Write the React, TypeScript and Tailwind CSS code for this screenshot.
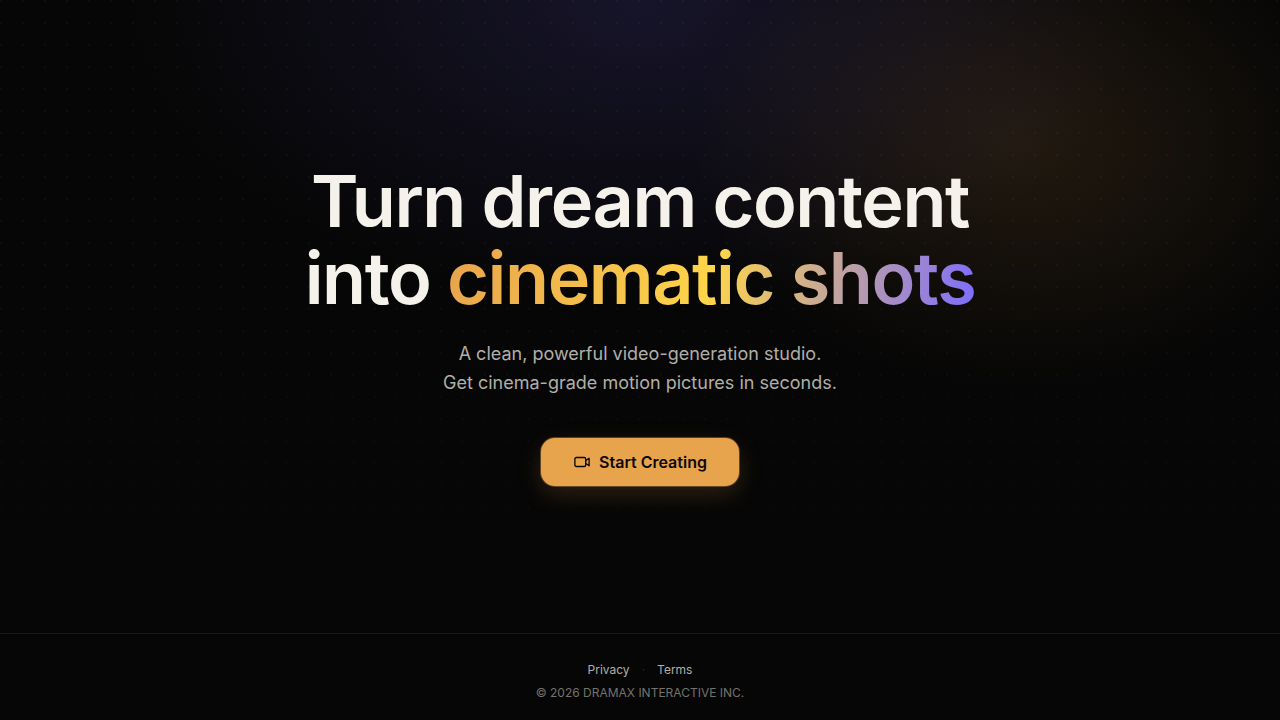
import type { SVGProps } from 'react'

interface FooterLink {
  label: string
  href: string
}

const FOOTER_LINKS: FooterLink[] = [
  { label: 'Privacy', href: '#privacy' },
  { label: 'Terms', href: '#terms' },
]

function VideoIcon(props: SVGProps<SVGSVGElement>) {
  return (
    <svg
      viewBox="0 0 24 24"
      fill="none"
      stroke="currentColor"
      strokeWidth="1.8"
      strokeLinecap="round"
      strokeLinejoin="round"
      aria-hidden="true"
      {...props}
    >
      <rect x="2.5" y="6" width="14.5" height="12" rx="2" />
      <path d="m17 10 4.5-3v10L17 14" />
    </svg>
  )
}

/**
 * Decorative backdrop: colour glows plus a dot grid that fades downwards
 */
function Backdrop() {
  return (
    <div aria-hidden="true" className="pointer-events-none absolute inset-0 -z-10">
      <div className="absolute inset-0 bg-[radial-gradient(ellipse_26%_34%_at_80%_20%,rgba(232,163,77,0.12),transparent),radial-gradient(ellipse_40%_42%_at_50%_0%,rgba(124,108,255,0.14),transparent)]" />
      <div className="absolute inset-0 bg-[radial-gradient(rgba(255,255,255,0.035)_1px,transparent_1px)] bg-[size:22px_22px] bg-[position:-10px_-10px] mask-[linear-gradient(to_bottom,black_40%,transparent_90%)]" />
    </div>
  )
}

function Hero() {
  return (
    <main className="flex flex-1 flex-col items-center justify-center px-6 pt-20 pb-[66px] text-center">
      <h1 className="text-7xl leading-[77px] font-semibold tracking-[-0.02em] text-[#f5f2eb]">
        Turn dream content
        <br />
        into{' '}
        <span className="bg-[linear-gradient(100deg,#e8a34d_0%,#ffd54a_50%,#7c6cff_100%)] bg-clip-text text-transparent">
          cinematic shots
        </span>
      </h1>
      <p className="mt-[23px] text-lg leading-[29px] text-[#b0afa8]">
        A clean, powerful video-generation studio.
        <br />
        Get cinema-grade motion pictures in seconds.
      </p>
      <button
        type="button"
        className="mt-[41px] flex h-12 items-center gap-2 rounded-[14px] bg-[#e8a34d] px-8 text-base font-semibold text-[#0b0805] shadow-[0_0_0_1px_rgba(232,163,77,0.35),0_8px_24px_rgba(232,163,77,0.18)]"
      >
        <VideoIcon className="size-[18px]" />
        Start Creating
      </button>
    </main>
  )
}

function Footer() {
  return (
    <footer className="flex flex-col items-center gap-[7px] border-t border-white/8 pt-7 pb-[19px] text-xs leading-4">
      <nav aria-label="Legal" className="flex items-center gap-3 text-[#b0afa8]">
        <a href={FOOTER_LINKS[0].href}>{FOOTER_LINKS[0].label}</a>
        <span className="text-[#2a2a2a]">·</span>
        <a href={FOOTER_LINKS[1].href}>{FOOTER_LINKS[1].label}</a>
      </nav>
      <p className="text-[#73726c]">© 2026 DRAMAX INTERACTIVE INC.</p>
    </footer>
  )
}

export default function App() {
  return (
    <div className="relative isolate flex min-h-screen flex-col overflow-hidden bg-[#060606] font-['Inter',sans-serif] antialiased">
      <Backdrop />
      <Hero />
      <Footer />
    </div>
  )
}
